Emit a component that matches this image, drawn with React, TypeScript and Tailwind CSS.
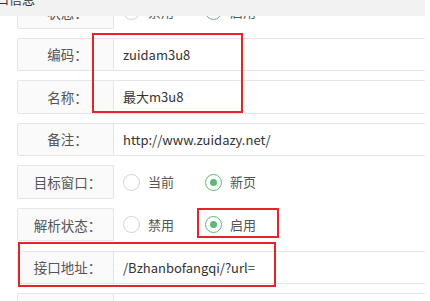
import React from 'react';

const font = { fontFamily: '"Microsoft YaHei", "Noto Sans CJK SC", "Noto Sans", sans-serif' };

const Radio = ({ label, checked }: { label: string; checked?: boolean }) => (
  <div className="flex items-center gap-[8px]">
    <span
      className={`flex h-[17px] w-[17px] items-center justify-center rounded-full border-[1.5px] ${
        checked ? 'border-[#5fb878]' : 'border-[#d2d2d2]'
      }`}
    >
      {checked && <span className="h-[7px] w-[7px] rounded-full bg-[#5fb878]" />}
    </span>
    <span className="text-[13px] text-[#555]">{label}</span>
  </div>
);

const Label = ({ text }: { text: string }) => (
  <div className="flex h-full w-[97px] shrink-0 items-center justify-center rounded-l-[2px] border border-[#e6e6e6] bg-[#fafafa] pl-[4px] text-[13.5px] text-[#555]">
    {text}
  </div>
);

const TextRow = ({ label, value }: { label: string; value: string }) => (
  <div className="flex h-[33.5px]">
    <Label text={label} />
    <div className="flex flex-1 items-center border-y border-[#e6e6e6] bg-white pl-[9px] text-[13px] text-[#333]">
      {value}
    </div>
  </div>
);

const RadioRow = ({ label, options }: { label: string; options: { text: string; checked?: boolean }[] }) => (
  <div className="flex h-[33.5px]">
    <Label text={label} />
    <div className="flex flex-1 items-center gap-[31px] pl-[9px]">
      {options.map((o) => (
        <Radio key={o.text} label={o.text} checked={o.checked} />
      ))}
    </div>
  </div>
);

export default function App() {
  return (
    <div className="relative flex h-[301px] w-[430px] flex-col overflow-hidden bg-white" style={font}>
      {/* title bar, content scrolled underneath */}
      <div className="relative h-[16px] w-[425px] shrink-0 overflow-hidden bg-[#f2f2f2]">
        <span className="absolute -top-[11px] left-[-4px] text-[13px] leading-[20px] text-[#333]">口信息</span>
      </div>

      <div className="min-h-0 flex-1 overflow-hidden">
        <div className="-mt-[21px] flex flex-col gap-[9.1px] pl-[17px] pr-[5px]">
          <RadioRow label="状态：" options={[{ text: '禁用' }, { text: '启用', checked: true }]} />
          <TextRow label="编码：" value="zuidam3u8" />
          <TextRow label="名称：" value="最大m3u8" />
          <TextRow label="备注：" value="http://www.zuidazy.net/" />
          <RadioRow label="目标窗口：" options={[{ text: '当前' }, { text: '新页', checked: true }]} />
          <RadioRow label="解析状态：" options={[{ text: '禁用' }, { text: '启用', checked: true }]} />
          <TextRow label="接口地址：" value="/Bzhanbofangqi/?url=" />
          <TextRow label="" value="" />
        </div>
      </div>

      {/* red annotation boxes */}
      <div className="absolute left-[92px] top-[33px] h-[80px] w-[151px] border-2 border-[#e3242b]" />
      <div className="absolute left-[197px] top-[208px] h-[30px] w-[82px] border-2 border-[#e3242b]" />
      <div className="absolute left-[18px] top-[242px] h-[45px] w-[258px] border-2 border-[#e3242b]" />
    </div>
  );
}
